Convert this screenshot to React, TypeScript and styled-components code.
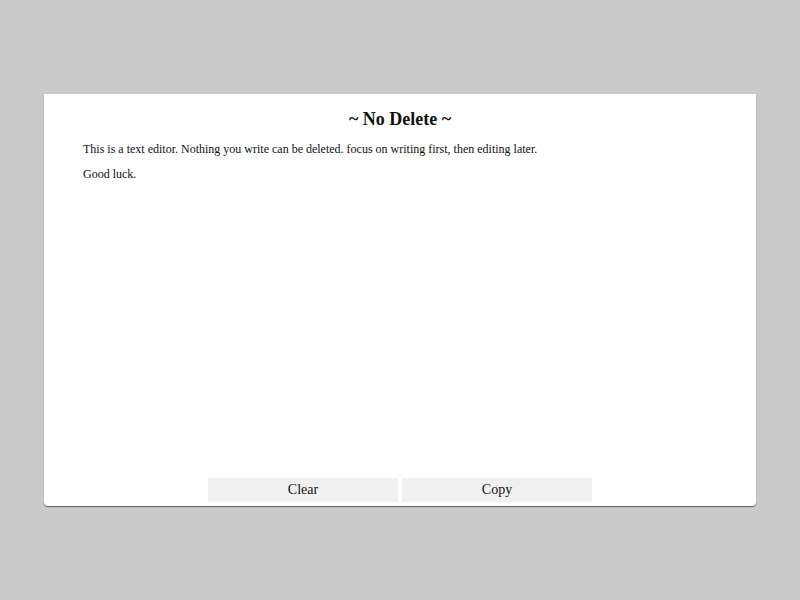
import React from "react";
import styled, { createGlobalStyle } from "styled-components";

const Global = createGlobalStyle`
  html, body { margin: 0; padding: 0; }
  body {
    background: #cacaca;
    font-family: "Liberation Serif", "DejaVu Serif", serif;
    color: #111;
  }
`;

const Page = styled.div`
  height: 600px;
  display: flex;
  align-items: center;
  justify-content: center;
`;

const Panel = styled.div`
  width: 712px;
  height: 412px;
  background: #fff;
  border-radius: 0 0 4px 4px;
  box-shadow: 0 1px 1px rgba(0, 0, 0, 0.55);
  display: flex;
  flex-direction: column;
  box-sizing: border-box;
  padding: 0 39px 4px 39px;
`;

const Title = styled.h1`
  margin: 0;
  padding-top: 13px;
  text-align: center;
  font-size: 18px;
  font-weight: bold;
  line-height: 24px;
`;

const Editor = styled.div`
  flex: 1;
  padding-top: 11px;
  font-size: 12px;
`;

const Para = styled.p`
  margin: 0 0 11px 0;
  line-height: 14px;
`;

const Footer = styled.div`
  display: flex;
  justify-content: center;
  gap: 4px;
`;

const Button = styled.button`
  width: 190px;
  height: 24px;
  border: none;
  background: #f0f0f0;
  font-family: inherit;
  font-size: 14px;
  color: #111;
  padding: 0;
  cursor: pointer;
`;

export default function App() {
  return (
    <>
      <Global />
      <Page>
        <Panel>
          <Title>~ No Delete ~</Title>
          <Editor>
            <Para>
              This is a text editor. Nothing you write can be deleted. focus on
              writing first, then editing later.
            </Para>
            <Para>Good luck.</Para>
          </Editor>
          <Footer>
            <Button>Clear</Button>
            <Button>Copy</Button>
          </Footer>
        </Panel>
      </Page>
    </>
  );
}
